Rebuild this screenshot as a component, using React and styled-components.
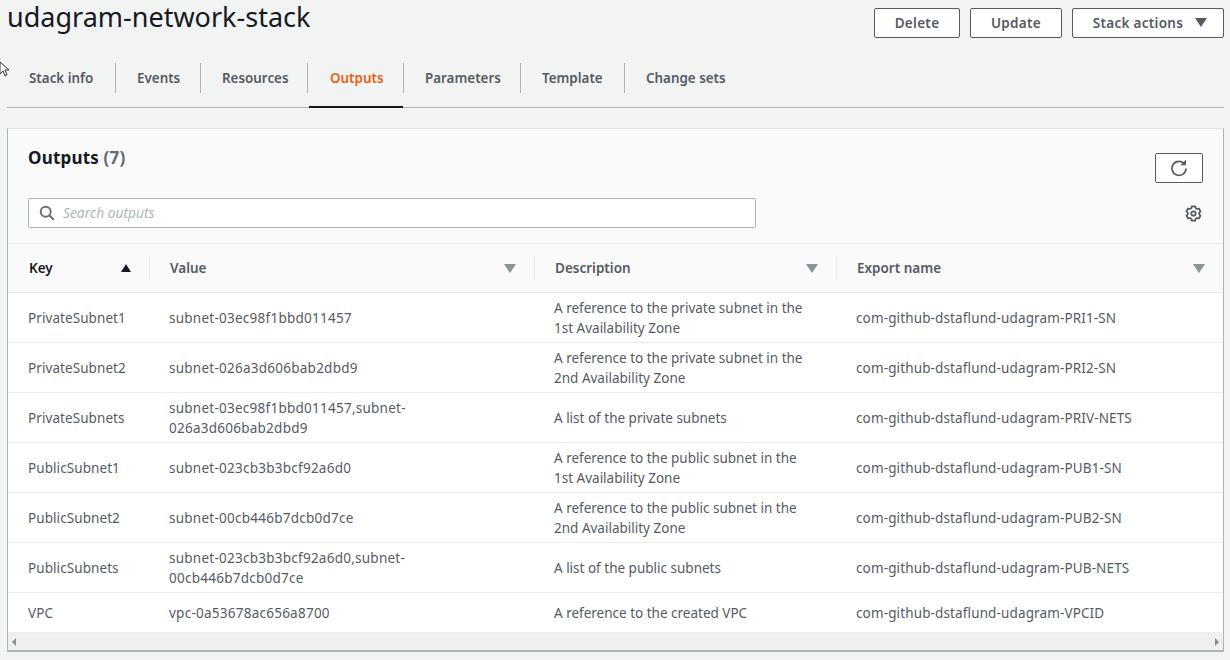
import React from "react";
import styled, { createGlobalStyle } from "styled-components";

const FONT = `"Noto Sans", "Open Sans", sans-serif`;

const Global = createGlobalStyle`
  html, body { margin: 0; padding: 0; background: #f2f3f3; }
  body { font-family: ${FONT}; font-size: 14px; color: #545b64; }
  * { box-sizing: border-box; }
`;

const Page = styled.div`
  position: relative;
  width: 1230px;
  height: 660px;
  overflow: hidden;
  padding: 0 6px 0 7px;
`;

const Cursor = styled.svg`
  position: absolute;
  left: -3px;
  top: 61px;
`;

const TopBar = styled.header`
  display: flex;
  justify-content: space-between;
  height: 62px;
`;

const Title = styled.h1`
  margin: 0;
  font-size: 27px;
  font-weight: 400;
  line-height: 34px;
  color: #16191f;
`;

const Actions = styled.div`
  display: flex;
  gap: 10px;
  padding-top: 8px;
`;

const Button = styled.button`
  display: flex;
  align-items: center;
  justify-content: center;
  gap: 12px;
  width: ${(p) => p.$w}px;
  height: 30px;
  padding: 0 0 1px ${(p) => (p.$menu ? 4 : 0)}px;
  font: 600 13.5px ${FONT};
  letter-spacing: 0.3px;
  color: #545b64;
  background: #fff;
  border: 1px solid #545b64;
  border-radius: 2px;
`;

const Caret = styled.i`
  width: 0;
  height: 0;
  border-left: 6px solid transparent;
  border-right: 6px solid transparent;
  border-top: 9px solid ${(p) => p.$color || "#545b64"};
`;

const Tabs = styled.nav`
  display: flex;
  height: 46px;
  padding-left: 1px;
  border-bottom: 1px solid #aab7b8;
`;

const Tab = styled.div`
  position: relative;
  flex: none;
  width: ${(p) => p.$w}px;
  margin-right: 1px;
  margin-left: ${(p) => (p.$active ? 1 : 0)}px;
  padding: 8px 0 0 21px;
  height: 46px;
  font-size: 13.4px;
  line-height: 16px;
  font-weight: 600;
  white-space: nowrap;
  color: ${(p) => (p.$active ? "#ec5f0f" : "#545b64")};
  border-bottom: 2px solid ${(p) => (p.$active ? "#16191f" : "transparent")};
  &:not(:last-child)::after {
    content: "";
    position: absolute;
    right: -1px;
    top: 1px;
    width: 1px;
    height: 30px;
    background: #aab7b8;
  }
`;

const Panel = styled.section`
  margin-top: 20px;
  width: 1217px;
  background: #fafafa;
  border: 1px solid #eaeded;
  border-left-color: #aab7b8;
  border-right-color: #aab7b8;
  border-bottom: 2px solid #aab7b8;
  border-top-color: #e1e4e4;
`;

const PanelHead = styled.div`
  height: 115px;
  padding: 18px 20px 0 20px;
  border-bottom: 1px solid #eaeded;
`;

const HeadTop = styled.div`
  display: flex;
  justify-content: space-between;
  height: 51px;
`;

const PanelTitle = styled.h2`
  margin: 0;
  font-size: 17px;
  line-height: 22px;
  font-weight: 700;
  letter-spacing: 0.2px;
  color: #16191f;
  span {
    color: #5f6b7a;
  }
`;

const RefreshButton = styled.button`
  display: flex;
  align-items: center;
  justify-content: center;
  width: 48px;
  height: 30px;
  margin: 6px 0 0;
  padding: 0;
  background: #fff;
  border: 1px solid #545b64;
  border-radius: 2px;
`;

const Filter = styled.div`
  display: flex;
  align-items: center;
  justify-content: space-between;
  padding-right: 1px;
`;

const Search = styled.div`
  display: flex;
  align-items: center;
  gap: 8px;
  width: 728px;
  height: 30px;
  padding: 0 0 1px 10px;
  background: #fff;
  border: 1px solid #aab7b8;
  border-radius: 2px;
  font-size: 13.8px;
  font-style: italic;
  color: #aab7b8;
`;

const COLUMNS = "142px 385px 302px 1fr";

const HeadRow = styled.div`
  display: grid;
  grid-template-columns: ${COLUMNS};
  height: 49px;
  border-bottom: 1px solid #eaeded;
`;

const HeadCell = styled.div`
  position: relative;
  display: flex;
  align-items: center;
  justify-content: space-between;
  padding: 0 19px 0 20px;
  font-weight: 600;
  font-size: 13.5px;
  color: ${(p) => (p.$sorted ? "#16191f" : "#545b64")};
  &:first-child {
    padding-left: 21px;
  }
  &:last-child {
    padding-right: 18px;
  }
  &:not(:last-child)::after {
    content: "";
    position: absolute;
    right: 0;
    top: 12px;
    width: 1px;
    height: 24px;
    background: #eaeded;
  }
`;

const SortMark = styled.i`
  width: 0;
  height: 0;
  border-left: 5.5px solid transparent;
  border-right: 5.5px solid transparent;
  border-bottom: 8px solid #16191f;
`;

const Row = styled.div`
  display: grid;
  grid-template-columns: ${COLUMNS};
  height: ${(p) => (p.$short ? 40 : 50)}px;
  background: #fff;
  &:not(:last-child) {
    border-bottom: 1px solid #eaeded;
  }
`;

const Cell = styled.div`
  display: flex;
  align-items: center;
  padding: 0 20px 0 19px;
  font-size: 13.5px;
  line-height: 20px;
  letter-spacing: 0.13px;
  color: #545b64;
  &:first-child {
    padding-left: 20px;
    letter-spacing: 0.08px;
  }
  &:nth-child(2) {
    letter-spacing: 0.25px;
  }
  &:nth-child(3) {
    letter-spacing: 0;
  }
`;

const Scrollbar = styled.div`
  display: flex;
  align-items: center;
  justify-content: space-between;
  height: 17px;
  padding: 0 4px;
  background: #f0f0f0;
`;

const Arrow = styled.i`
  width: 0;
  height: 0;
  border-top: 4px solid transparent;
  border-bottom: 4px solid transparent;
  ${(p) => (p.$right ? "border-left: 4px solid #8a8f92;" : "border-right: 4px solid #8a8f92;")}
`;

const tabs = [
  ["Stack info", 107],
  ["Events", 84],
  ["Resources", 106],
  ["Outputs", 94],
  ["Parameters", 116],
  ["Template", 103],
  ["Change sets", 120],
];

const rows = [
  ["PrivateSubnet1", "subnet-03ec98f1bbd011457", "A reference to the private subnet in the 1st Availability Zone", "com-github-dstaflund-udagram-PRI1-SN"],
  ["PrivateSubnet2", "subnet-026a3d606bab2dbd9", "A reference to the private subnet in the 2nd Availability Zone", "com-github-dstaflund-udagram-PRI2-SN"],
  ["PrivateSubnets", "subnet-03ec98f1bbd011457,subnet-026a3d606bab2dbd9", "A list of the private subnets", "com-github-dstaflund-udagram-PRIV-NETS"],
  ["PublicSubnet1", "subnet-023cb3b3bcf92a6d0", "A reference to the public subnet in the 1st Availability Zone", "com-github-dstaflund-udagram-PUB1-SN"],
  ["PublicSubnet2", "subnet-00cb446b7dcb0d7ce", "A reference to the public subnet in the 2nd Availability Zone", "com-github-dstaflund-udagram-PUB2-SN"],
  ["PublicSubnets", "subnet-023cb3b3bcf92a6d0,subnet-00cb446b7dcb0d7ce", "A list of the public subnets", "com-github-dstaflund-udagram-PUB-NETS"],
  ["VPC", "vpc-0a53678ac656a8700", "A reference to the created VPC", "com-github-dstaflund-udagram-VPCID"],
];

const RefreshIcon = () => (
  <svg width="18" height="18" viewBox="0 0 18 18" fill="none" stroke="#545b64" strokeWidth="1.7">
    <path d="M14.6 5.2A7 7 0 1 0 16 9.5" />
    <path d="M15.5 1.2v4.6h-4.6" fill="#545b64" strokeWidth="1" />
  </svg>
);

const SearchIcon = () => (
  <svg width="16" height="16" viewBox="0 0 16 16" fill="none" stroke="#687078" strokeWidth="2">
    <circle cx="6.7" cy="6.7" r="5" />
    <path d="M10.5 10.5l4.3 4.3" />
  </svg>
);

const GearIcon = () => (
  <svg width="17" height="17" viewBox="0 0 17 17" fill="none" stroke="#545b64">
    <path
      strokeWidth="1.8"
      strokeLinejoin="round"
      d="M6.8 1.3h3.4l.4 1.8 1.5.9 1.8-.5 1.6 2.9-1.3 1.3v1.6l1.3 1.3-1.6 2.9-1.8-.5-1.5.9-.4 1.8H6.8l-.4-1.8-1.5-.9-1.8.5-1.6-2.9 1.3-1.3V7.7L1.5 6.4l1.6-2.9 1.8.5 1.5-.9z"
    />
    <circle cx="8.5" cy="8.5" r="2.2" strokeWidth="1.8" />
  </svg>
);

export default function App() {
  return (
    <Page>
      <Global />
      <Cursor width="12" height="18" viewBox="0 0 12 18">
        <path d="M3 1v12l3-3 2 5 2-1-2-5h4z" fill="#fff" stroke="#333" strokeWidth="1" />
      </Cursor>
      <TopBar>
        <Title>udagram-network-stack</Title>
        <Actions>
          <Button $w={86}>Delete</Button>
          <Button $w={92}>Update</Button>
          <Button $w={152} $menu>
            Stack actions <Caret />
          </Button>
        </Actions>
      </TopBar>
      <Tabs>
        {tabs.map(([t, w]) => (
          <Tab key={t} $w={w} $active={t === "Outputs"}>
            {t}
          </Tab>
        ))}
      </Tabs>
      <Panel>
        <PanelHead>
          <HeadTop>
            <PanelTitle>
              Outputs <span>(7)</span>
            </PanelTitle>
            <RefreshButton>
              <RefreshIcon />
            </RefreshButton>
          </HeadTop>
          <Filter>
            <Search>
              <SearchIcon />
              Search outputs
            </Search>
            <GearIcon />
          </Filter>
        </PanelHead>
        <HeadRow>
          <HeadCell $sorted>
            Key <SortMark />
          </HeadCell>
          <HeadCell>
            Value <Caret $color="#879596" />
          </HeadCell>
          <HeadCell>
            Description <Caret $color="#879596" />
          </HeadCell>
          <HeadCell>
            Export name <Caret $color="#879596" />
          </HeadCell>
        </HeadRow>
        {rows.map((r) => (
          <Row key={r[0]} $short={r[0] === "VPC"}>
            {r.map((c) => (
              <Cell key={c}>{c}</Cell>
            ))}
          </Row>
        ))}
        <Scrollbar>
          <Arrow />
          <Arrow $right />
        </Scrollbar>
      </Panel>
    </Page>
  );
}
